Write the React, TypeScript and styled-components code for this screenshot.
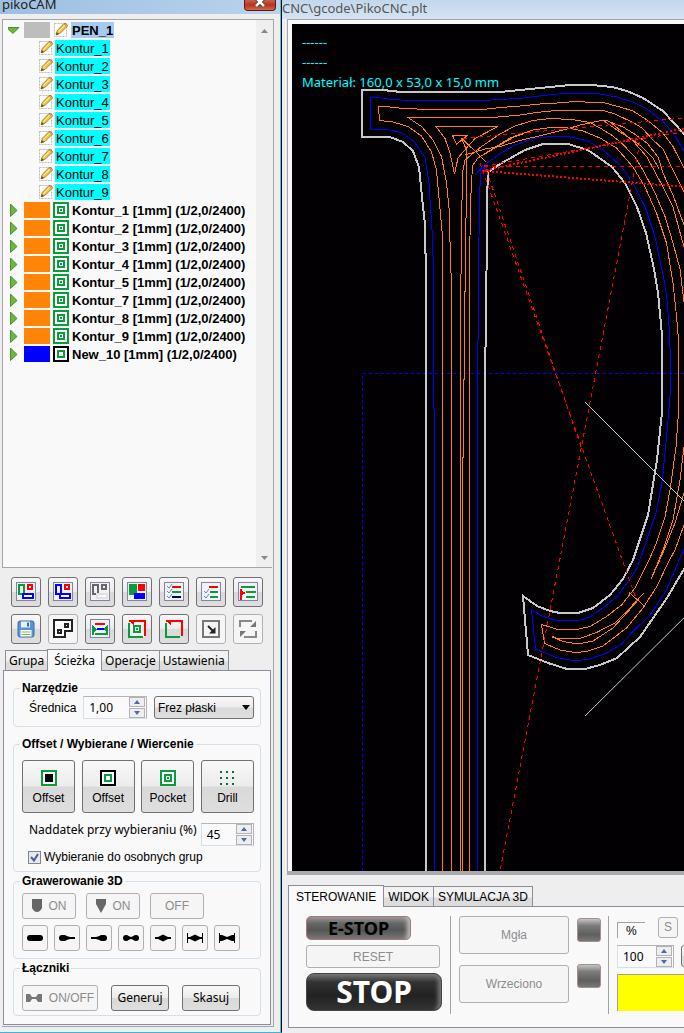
import React from 'react';
import styled, { createGlobalStyle, css } from 'styled-components';

const sans = `"Liberation Sans", Arial, sans-serif`;
const human = `"Noto Sans", "Open Sans", Tahoma, sans-serif`;
const line = '#8c8c9c';

const Global = createGlobalStyle`
  *, *::before, *::after { box-sizing: border-box; }
  body { margin: 0; background: #eeeeef; color: #000; font: 12px/14px ${sans}; overflow-x: hidden; }
  button, input, select { font: inherit; color: inherit; margin: 0; }
`;

const Screen = styled.main`
  display: grid;
  grid-template-columns: 282px minmax(0, 1fr);
  min-height: 100vh;
  overflow: hidden;
`;

const CamWindow = styled.section`
  display: flex;
  flex-direction: column;
  border-right: 1px solid #000;
  border-bottom: 1px solid #35b8e0;
  box-shadow: inset -1px 0 #35c8f4;
`;

const CamTitle = styled.header`
  display: flex;
  justify-content: space-between;
  align-items: flex-end;
  height: 14px;
  padding: 0 4px 0 2px;
  margin-right: 1px;
  overflow: hidden;
  background: linear-gradient(90deg, #9dbfe2, #b9d3ec);
`;

const TitleText = styled.h1`
  margin: 0;
  font: 13px/20px ${human};
  color: #222;
`;

const CloseButton = styled.button`
  display: flex;
  justify-content: center;
  align-self: flex-start;
  width: 32px;
  height: 11px;
  padding: 0;
  border: 1px solid #5d1a16;
  border-top: 0;
  border-radius: 0 0 4px 4px;
  background: linear-gradient(#c8604f, #b8321c 50%, #cf6a50);
`;

const CamBody = styled.div`
  display: flex;
  flex-direction: column;
  flex: 1;
  margin: 5px 7px 5px 2px;
  padding: 0 1px 1px 0;
  border: 1px solid #a4a4aa;
  border-left: 0;
`;

const TreeBox = styled.div`
  display: flex;
  flex: 1;
  min-height: 460px;
  border: 1px solid #a4a4aa;
  border-top: 0;
  border-right: 0;
  background: #f9f9f9;
`;

const Tree = styled.ul`
  flex: 1;
  margin: 0;
  padding: 1px 0 0 5px;
  list-style: none;
`;

const TreeRow = styled.li<{ $child?: boolean }>`
  display: flex;
  align-items: center;
  height: 18px;
  padding-left: ${p => (p.$child ? 30 : 0)}px;
  font-size: 13px;
  white-space: nowrap;
`;

const Twisty = styled.button`
  display: flex;
  width: 16px;
  height: 16px;
  padding: 0;
  border: 0;
  background: none;
`;

const Swatch = styled.span<{ $color: string }>`
  width: 26px;
  height: 16px;
  margin-right: 3px;
  background: ${p => p.$color};
`;

const RowLabel = styled.span<{ $bg?: string; $bold?: boolean }>`
  height: 16px;
  padding: 0 1px;
  margin-left: ${p => (p.$bold ? 2 : 1)}px;
  line-height: 17px;
  font-weight: ${p => (p.$bold ? 700 : 400)};
  background: ${p => p.$bg ?? 'none'};
`;

const ScrollTrack = styled.div`
  display: flex;
  flex-direction: column;
  justify-content: space-between;
  align-items: center;
  width: 16px;
  padding: 9px 0 7px;
  background: #efeff0;
`;

const ToolGrid = styled.div`
  display: grid;
  grid-template-columns: repeat(7, 30px);
  gap: 7px;
  padding: 9px 0 4px 9px;
`;

const raised = css`
  border: 1px solid #707074;
  background: linear-gradient(#f8f8f8, #ececec 48%, #d9d9d9 52%, #dedede);
`;

const Button = styled.button<{ $w?: number; $h?: number; $flat?: boolean; $font?: string }>`
  display: flex;
  align-items: center;
  justify-content: center;
  gap: 7px;
  width: ${p => p.$w ?? 26}px;
  height: ${p => p.$h ?? 26}px;
  padding: 0;
  border-radius: 3px;
  font-family: ${p => p.$font ?? sans};
  white-space: nowrap;
  ${raised}
  ${p => p.$flat && css`border-color: #b0b0b2; background: #f5f5f5;`}
  &:disabled { color: #8c8c8e; }
`;

const BigButton = styled(Button)`
  flex-direction: column;
  gap: 5px;
  padding-top: 2px;
`;

const Tabs = styled.nav<{ $left?: boolean }>`
  display: flex;
  align-items: flex-end;
  height: 22px;
  padding-left: ${p => (p.$left ? 3 : 0)}px;
`;

const Tab = styled.button<{ $active?: boolean; $tight?: boolean }>`
  height: ${p => (p.$active ? 22 : 20)}px;
  padding: 0 ${p => (p.$active ? 7 : 4) - (p.$tight ? 1 : 0)}px;
  border: 1px solid ${line};
  border-bottom: 0;
  margin-left: -1px;
  font-family: ${p => (p.$tight ? human : sans)};
  background: ${p => (p.$active ? '#f9f9f9' : 'linear-gradient(#f2f2f2 50%, #dcdcdc 60%)')};
  position: relative;
  z-index: ${p => (p.$active ? 1 : 0)};
  margin-bottom: ${p => (p.$active ? -1 : 0)}px;
  &:first-child { margin-left: 0; }
`;

const CamPanel = styled.div`
  display: flex;
  flex-direction: column;
  margin: 0 1px 0 1px;
  padding: 10px 9px 8px;
  border: 1px solid ${line};
  background: #f9f9f9;
`;

const Group = styled.fieldset<{ $top: number; $pad: number; $end?: number }>`
  display: flex;
  flex-direction: column;
  min-width: 0;
  margin: ${p => p.$top}px 0 0;
  padding: ${p => p.$pad}px 6px ${p => p.$end ?? 7}px 8px;
  border: 1px solid #d3dfea;
  border-radius: 4px;
`;

const Legend = styled.legend`
  padding: 0 2px;
  margin-left: -2px;
  font-weight: 700;
`;

const Row = styled.div<{ $gap?: number; $top?: number; $spread?: boolean; $indent?: number; $start?: boolean }>`
  display: flex;
  align-items: ${p => (p.$start ? 'flex-start' : 'center')};
  gap: ${p => p.$gap ?? 6}px;
  margin-top: ${p => p.$top ?? 0}px;
  padding-left: ${p => p.$indent ?? 0}px;
  justify-content: ${p => (p.$spread ? 'space-between' : 'flex-start')};
`;

const FieldLabel = styled.label<{ $font?: string }>`
  font-family: ${p => p.$font ?? sans};
  white-space: nowrap;
`;

const SpinBox = styled.span<{ $w: number }>`
  display: flex;
  align-items: center;
  width: ${p => p.$w}px;
  height: 23px;
  padding-right: 1px;
  border: 1px solid #d5dfe8;
  border-top-color: #b4b4b8;
  border-right-color: #b4b4b8;
  background: #fafafa;
  input {
    flex: 1;
    width: 0;
    height: 20px;
    padding: 0 0 0 5px;
    border: 0;
    outline: 0;
    background: none;
    font-family: ${human};
  }
`;

const SpinButtons = styled.span`
  display: flex;
  flex-direction: column;
  gap: 1px;
  button {
    display: flex;
    align-items: center;
    justify-content: center;
    width: 16px;
    height: 10px;
    padding: 0;
    border: 1px solid #b2b2b6;
    background: #eeeeef;
  }
`;

const SelectWrap = styled.span`
  position: relative;
  display: flex;
  width: 100px;
  select {
    width: 100%;
    height: 23px;
    padding: 0 3px;
    border-radius: 3px;
    appearance: none;
    ${raised}
  }
  svg { position: absolute; right: 4px; top: 9px; pointer-events: none; }
`;

const CheckWrap = styled.span`
  position: relative;
  display: flex;
  input {
    width: 13px;
    height: 13px;
    appearance: none;
    border: 1px solid #85858c;
    background: #e6e9ee;
  }
  svg { position: absolute; left: 2px; top: 2px; pointer-events: none; }
  input:not(:checked) + svg { display: none; }
`;

const CncWindow = styled.section`
  display: flex;
  flex-direction: column;
  min-width: 0;
`;

const CncTitle = styled.header`
  height: 19px;
  overflow: hidden;
  background: linear-gradient(#c3d7ec, #d5e3f2);
  h2 {
    margin: 0;
    font: 13px/16px ${human};
    color: #555;
    white-space: nowrap;
  }
`;

const Viewport = styled.div`
  position: relative;
  display: flex;
  flex: 1;
  min-height: 400px;
  margin-left: 5px;
  padding: 4px 0 0 4px;
  border: 1px solid #a4a4aa;
  border-right: 0;
  background: #f9f9f9;
  border-bottom: 4px solid #a9a9ae;
  svg { flex: 1; width: 100%; min-width: 0; background: #030004; }
`;

const Readout = styled.div`
  position: absolute;
  left: 14px;
  top: 12px;
  font: 13px/20px ${human};
  color: #0ff;
  white-space: pre;
`;

const ControlArea = styled.div`
  padding: 9px 0 5px 6px;
`;

const ControlPanel = styled.div`
  display: grid;
  grid-template-columns: 137px 120px 24px 68px;
  column-gap: 7px;
  height: 122px;
  padding: 9px 0 0 17px;
  border: 1px solid ${line};
  border-right: 0;
  overflow: hidden;
  background: #f9f9f9;
`;

const Stack = styled.div<{ $gap: number; $rule?: boolean; $top?: number }>`
  display: flex;
  flex-direction: column;
  gap: ${p => p.$gap}px;
  padding-top: ${p => p.$top ?? 0}px;
  ${p => p.$rule && css`
    height: 98px;
    padding-left: 8px;
    border-left: 1px solid #a0a0a6;
  `}
`;

const GlossButton = styled.button<{ $stop?: boolean }>`
  width: ${p => (p.$stop ? 136 : 105)}px;
  height: ${p => (p.$stop ? 38 : 24)}px;
  padding: 0;
  border: 1px solid ${p => (p.$stop ? '#444' : '#a87878')};
  border-radius: ${p => (p.$stop ? 8 : 5)}px;
  color: ${p => (p.$stop ? '#fff' : '#000')};
  font: ${p => (p.$stop ? '700 30px/34px' : '700 18px/22px')} "Noto Sans", sans-serif;
  background: ${p => (p.$stop
    ? 'linear-gradient(#777, #333 22%, #222 60%, #333)'
    : 'linear-gradient(#999, #666 30%, #555 60%, #777)')};
  box-shadow: inset -7px 0 4px -4px ${p => (p.$stop ? '#777' : '#bbb')};
`;

const Lamp = styled.span`
  width: 24px;
  height: 24px;
  border: 1px solid #a98c8c;
  border-radius: 3px;
  background: linear-gradient(#c4c4c4, #7c7c7c 30%, #5f5f5f 70%, #777);
`;

const Percent = styled.span`
  width: 28px;
  height: 16px;
  padding: 1px 0 0 8px;
  margin-top: 6px;
  border: solid #a0a0a6;
  border-width: 1px 0 0 1px;
`;

const Overrides = styled.div<{ $gap?: number }>`
  display: flex;
  gap: ${p => p.$gap ?? 13}px;
  align-items: center;
  width: 120px;
  height: 22px;
`;

const YellowBar = styled.div`
  width: 120px;
  height: 37px;
  border: solid #a0a0a6;
  border-width: 1px 0 0 1px;
  background: #ff0;
`;

const G = '#0a9b3c';

const Twist = ({ open }: { open?: boolean }) => (
  <svg width="14" height="16" viewBox="0 0 14 16">
    <path d={open ? 'M-1.500 5.500H11L5 11.500Z' : 'M2.500 2L9 8.500L2.500 14.500Z'} fill="#6cb83a" stroke="#357c1c" strokeWidth="0.8" />
  </svg>
);

const Pencil = () => (
  <svg width="16" height="16" viewBox="0 0 16 16">
    <rect x="1.5" y="1.5" width="12" height="13" fill="#fff" stroke="#bbb" strokeDasharray="2 1" />
    <path d="M3 13L4.3 8.5L11 1.5Q14 1 14.5 4L7.5 11Z" fill="#f2c84c" stroke="#9a6a20" strokeWidth="0.8" />
    <path d="M5.5 9.5L12 3" stroke="#fff0a0" />
    <path d="M3 13L3.8 10L6 12.2Z" fill="#6b4a20" />
    <path d="M11 1.8L14 4.8" stroke="#d88860" />
  </svg>
);

const Nested = ({ kind, size = 16 }: { kind: 'pocket' | 'offset' | 'solid'; size?: number }) => (
  <svg width={size} height={size} viewBox="0 0 16 16" shapeRendering="crispEdges">
    <rect x="1" y="1" width="14" height="14" fill="#fff" stroke={kind === 'offset' ? '#000' : G} strokeWidth="2" />
    {kind === 'solid' && <rect x="4" y="4" width="8" height="8" fill="#000" />}
    {kind === 'offset' && <rect x="5" y="5" width="6" height="6" fill="none" stroke={G} strokeWidth="2" />}
    {kind === 'pocket' && <>
      <rect x="5" y="5" width="6" height="6" fill="none" stroke={G} strokeWidth="2" />
      <rect x="7" y="7" width="2" height="2" fill={G} />
    </>}
  </svg>
);

const DrillIcon = () => (
  <svg width="16" height="16" viewBox="0 0 16 16" fill="#0a6b3c" shapeRendering="crispEdges">
    {[1, 7, 13].flatMap(y => [1, 7, 13].map(x => <rect key={`${x}-${y}`} x={x} y={y} width="2" height="2" />))}
  </svg>
);

const Plate = ({ children }: { children: React.ReactNode }) => (
  <svg width="20" height="20" viewBox="0 0 20 20" fill="none" shapeRendering="crispEdges">
    <rect x="0.5" y="0.5" width="19" height="18" fill="#f2f2f6" stroke="#8484a0" />
    {children}
  </svg>
);

const Blocks = ({ a, b, c }: { a: string; b: string; c: string }) => (
  <Plate>
    <rect x="3" y="3" width="5" height="9" stroke={a} strokeWidth="2" />
    <rect x="12" y="3" width="4" height="4" stroke={b} strokeWidth="2" />
    <rect x="7" y="12" width="10" height="4" fill="#fff" stroke={c} strokeWidth="2" />
  </Plate>
);

const Ticks = ({ rows }: { rows: number[] }) => (
  <>{rows.map(y => <path key={y} d={`M3 ${y}l2 2l3-4`} stroke="#5a8cc0" shapeRendering="auto" />)}</>
);

const toolIcons: { name: string; flat?: boolean; icon: React.ReactNode }[] = [
  { name: 'Kolory', icon: <Blocks a={G} b="#f00" c="#00f" /> },
  { name: 'Grupy', icon: <Blocks a="#00f" b="#f00" c="#00f" /> },
  { name: 'Szare', icon: <Blocks a="#666" b="#666" c="#e2e2e2" /> },
  { name: 'Wypełnione', icon: <Plate>
    <path d="M2 2h8v11H2z" fill={G} /><path d="M11 2h7v7h-7z" fill="#f00" /><path d="M7 11h11v6H7z" fill="#00f" />
  </Plate> },
  { name: 'Zaznacz wszystko', icon: <Plate>
    <Ticks rows={[4, 9, 14]} />
    <path d="M8 5h9" stroke="#f00" strokeWidth="2" /><path d="M8 10h9" stroke={G} strokeWidth="2" /><path d="M8 15h9" stroke="#006" strokeWidth="2" />
  </Plate> },
  { name: 'Zaznacz', icon: <Plate>
    <Ticks rows={[9, 14]} />
    <path d="M8 5h9" stroke="#f00" strokeWidth="2" /><path d="M9 10h8M9 15h8" stroke={G} strokeWidth="2" />
  </Plate> },
  { name: 'Kolejność', icon: <Plate>
    <path d="M3 5h14M8 10h10M8 15h9" stroke={G} strokeWidth="2" />
    <path d="M3 7v11" stroke="#f00" strokeWidth="2" /><path d="M3 8l5 3l-5 3z" fill="#f00" />
  </Plate> },
  { name: 'Zapisz', icon: (
    <svg width="18" height="18" viewBox="0 0 18 18">
      <rect x="1" y="1" width="16" height="16" rx="2" fill="#5d92d4" stroke="#3c68a8" />
      <path d="M4 1.5h9v6H4z" fill="#e8f1fa" /><path d="M10 2.5h2v4h-2z" fill="#3c68a8" />
      <path d="M3.5 10h11v6.500h-11z" fill="#fff" /><path d="M4.500 12h9M4.500 14.500h9" stroke="#7cb84a" />
    </svg>
  ) },
  { name: 'Obrys', flat: true, icon: (
    <svg width="20" height="20" viewBox="0 0 20 20" fill="#fff" stroke="#222" strokeWidth="2" shapeRendering="crispEdges">
      <path d="M1 1h18v11h-7v6H1z" /><path d="M12 5h3v3h-3zM5 11h3v3h-3z" />
    </svg>
  ) },
  { name: 'Przesuń', icon: <Plate>
    <path d="M5 5h10" stroke="#f00" strokeWidth="2" /><path d="M7 10h7" stroke="#00f" strokeWidth="2" />
    <path d="M5 15h11" stroke={G} strokeWidth="2" /><path d="M2 6l5 4l-3 3v3H2zM18 6l-5 4l3 3v3h2z" fill={G} />
  </Plate> },
  { name: 'Kieszeń', icon: (
    <svg width="18" height="18" viewBox="0 0 18 18" fill="none" strokeWidth="2" shapeRendering="crispEdges">
      <rect x="1" y="1" width="16" height="16" fill="#f4f4f4" />
      <path d="M1 3v14h14" stroke={G} /><path d="M1 1h16v15" stroke="#f00" />
      <path d="M0 0l6 6V1z" fill="#f00" /><rect x="6" y="6" width="6" height="6" stroke={G} /><path d="M8 9h2" stroke={G} />
    </svg>
  ) },
  { name: 'Róg', icon: (
    <svg width="18" height="18" viewBox="0 0 18 18" fill="none" strokeWidth="2" shapeRendering="crispEdges">
      <path d="M1 3v14h14" stroke={G} /><path d="M1 1h16v15" stroke="#f00" /><path d="M0 0l6 6V1z" fill="#f00" />
    </svg>
  ) },
  { name: 'Skala', flat: true, icon: (
    <svg width="18" height="18" viewBox="0 0 18 18" fill="none" stroke="#777" strokeWidth="2">
      <path d="M1 1h16v16H1z" shapeRendering="crispEdges" /><path d="M6 6l6 6" stroke="#222" />
      <path d="M13.500 7v6.500H7z" fill="#222" stroke="none" />
    </svg>
  ) },
  { name: 'Obrót', flat: true, icon: (
    <svg width="18" height="18" viewBox="0 0 18 18" fill="none" stroke="#888" strokeWidth="2">
      <path d="M1 7V1h12M17 11v6H5" shapeRendering="crispEdges" />
      <path d="M17 1v6h-6zM1 17v-6h6z" fill="#777" stroke="none" />
    </svg>
  ) },
];

const engraving: React.ReactNode[] = [
  <rect key="a" x="0" y="3" width="16" height="6" rx="3" />,
  <g key="b"><rect x="0" y="3" width="8" height="6" rx="3" /><path d="M6 3.500L11 5h5v2h-5L6 8.500z" /></g>,
  <g key="c"><rect x="8" y="3" width="8" height="6" rx="3" /><path d="M10 3.500L5 5H0v2h5l5 1.500z" /></g>,
  <g key="d"><circle cx="3" cy="6" r="3" /><circle cx="13" cy="6" r="3" /><path d="M4 3.500L8 5l4-1.500v5L8 7L4 8.500z" /></g>,
  <path key="e" d="M0 5h3l5-2.500L13 5h3v2h-3L8 9.500L3 7H0z" />,
  <path key="f" d="M0 1h1v4h2l5-2.500L13 5h2V1h1v10h-1V7h-2L8 9.500L3 7H1v4H0z" />,
  <path key="g" d="M0 1h1v2h2l5 2l5-2h2V1h1v10h-1V9h-2L8 7L3 9H1v2H0z" />,
];

const Arrow = ({ up }: { up?: boolean }) => (
  <svg width="6" height="4" viewBox="0 0 6 4"><path d={up ? 'M0 4L3 0L6 4Z' : 'M0 0L3 4L6 0Z'} fill="#5068a8" /></svg>
);

const ScrollArrow = ({ up }: { up?: boolean }) => (
  <svg width="7" height="4" viewBox="0 0 7 4"><path d={up ? 'M0 4L3.500 0L7 4Z' : 'M0 0L3.500 4L7 0Z'} fill="#888" /></svg>
);

const Spinner = ({ id, value, width, label }: { id: string; value: string; width: number; label?: string }) => (
  <SpinBox $w={width}>
    <input id={id} defaultValue={value} aria-label={label} />
    <SpinButtons>
      <button aria-label="Zwiększ"><Arrow up /></button>
      <button aria-label="Zmniejsz"><Arrow /></button>
    </SpinButtons>
  </SpinBox>
);

const Toolpath = () => (
  <svg viewBox="292 24 392 847" preserveAspectRatio="xMinYMin slice" fill="none" strokeWidth="1" shapeRendering="crispEdges">
    <g stroke="#00f" strokeDasharray="3 3"><path d="M362.500 871V373.500H720" /></g>
    <g stroke="#00f">
      <path d="M434.500 871V410L433.500 409V270L432 230L429 183L425 157L413 140.500L401 132.500L388 129.500H370.500V97.500H378L393 99.500L408 100.500H483L500 99.500L523 98L543 95.500L563 93.500H597L617 97L633 102L647 109L663 121.500L673 133L684 151L700 185" />
      <path d="M477.500 871V340L478.500 338V270L479.500 203L480.500 170L483 166M475 175L483 166L501 153L515 145L533 138.500L550 136.500L568 136.500L588 141L603 150L620 165L633 183L645 206.500L655 236.500L661 265L666.500 293L669 326L670.500 360V390L668 420L662.500 480L656 513L637 568L628 582L616.500 597L603 608L590 617L576.500 621L556.500 620.500L543 616.500L531.500 610L535.500 649L556.500 657.500L575 661L590 659L606.500 653L621.500 644L633 631.500L650 615L666.500 590L677 565L684 549L700 510" />
      <path d="M478 163L489 173" />
    </g>
    <g stroke="#ff8408">
      <path d="M442.500 871V236L439.500 203L436.500 170L431.500 152L421.500 136L408 126.500L393 122L379.500 120.500L378.500 106.500H385L403 108.500L430 109.500H483L500 107.500L520 106L540 104L557 103L575 101.500L605 103L621.500 107.500L633 111L647 120L663 133L673 146.500L684 168L700 205" />
      <path d="M451.500 871V275L450.500 270L449.500 213L446.500 183L441.500 156.500L433 140L421.500 126.500L408 117.500H493L520 115L536.500 112.500L556.500 110.500H603L615 114L633 122.500L642 128L653 140L663 149L673 170L684 192L700 230" />
      <path d="M436 126.500H498L475 138.500L466.500 148L458 158L454.500 174L450 153L445 138.500ZM452.500 135.500H467.500L456.500 144Z" />
      <path d="M460.500 871V279L461.500 270V216L463 170L465 160L481.500 146.500L500 134L515 126L533 120.500L550 118.500L571.500 119.500L590 122.500L600 128L611.500 135L621.500 143L635 157L643 170L655 193L665 216.500L673 243L680 269L684 302L688 370L684 447L680 480L673 520L663 550L652 577" />
      <path d="M462.500 871V457H463.500V379H464.500V291H465.500L466.500 150L461.500 138L486 162" />
      <path d="M469.500 871V270L470.500 203L472.500 165.500L478 158L500 145L516.500 135.500L533 130L550 127.500H566L583 131L600 138L616.500 148L633 167L645 187L656.500 213L666.500 243L673 283L676.500 316L678.500 340V412L676 447L670.500 487L665 517L656.500 543L649 560L635 588L621.500 605L606.500 616.500L590 626.500L576.500 629.500H558L541.500 624.500L544.500 643.500L560 650L575 652.500L587 651.500L603 646L626.500 628L643 608L656.500 587L669 561L675 550L684 525L700 480" />
      <path d="M465 155L485 149L500 146.500L520 140.500L543 135L567 129L580 125L601.500 120.500H606.500L623 127L633 133L647 143L658 157L663 173L673 195L684 225" />
      <path d="M604 121L617 130L640 145L653 158L659 169M609 121L633 141L647 157L663 187L673 207L684 247" />
      <path d="M478 158L510 138L523 134M684 493L675 523L662 555L651 579" />
      <path d="M552.500 636.500L557 638.500H580L596.500 632.500L615 623L637 601.500M552.500 637L563 641.500L578 644L593 641L613 628L637 601.500M629 592.500L645 606.500M644 593L628 610" />
    </g>
    <g stroke="#c8c8c8" strokeWidth="2">
      <path d="M426 871V270L424.500 220L422 197L419 167L413 151L403 142L390 137H362V90H383L401 92H500L520 90L540 88L570 85H592L612 87L627 91L643 98L663 111L684 134L710 175M710 515L684 569L667 598L640 637L617 658L600 665L585 669H567L548 663L528 655L523 596L537 606L550 611L560 613H578L593 608L610 595L623 579L633 560L648 515L657 460L662 412V335L658 293L654 269L646 233L637 207L625 183L612 167L588 150L568 144H543L525 150L500 164L488 172L487 200L486 346L485 348V871" />
    </g>
    <g stroke="#f00" strokeDasharray="4 4">
      <path d="M463 138.500L700 116.500M484 166L700 129M484 166.500H700" />
      <path d="M480 163L637 601M640 142L500 871" />
      <path d="M485 166L581 447" strokeDashoffset="3" />
    </g>
    <g stroke="#f00" strokeWidth="2" strokeDasharray="2 2">
      <path d="M482 171L700 125M484 171L700 188" />
    </g>
    <path d="M585 402L700 517M585 716L700 602" stroke="#b4d4d4" shapeRendering="auto" />
  </svg>
);

export default function App() {
  return (
    <Screen>
      <Global />
      <CamWindow>
        <CamTitle>
          <TitleText>pikoCAM</TitleText>
          <CloseButton aria-label="Zamknij">
            <svg width="12" height="8" viewBox="0 0 12 8"><path d="M2 -2L10 6M10 -2L2 6" stroke="#433" strokeWidth="4" /><path d="M2 -2L10 6M10 -2L2 6" stroke="#fff" strokeWidth="2.500" /></svg>
          </CloseButton>
        </CamTitle>
        <CamBody>
          <TreeBox>
            <Tree>
              <TreeRow>
                <Twisty aria-label="Zwiń"><Twist open /></Twisty>
                <Swatch $color="#bdbdbd" />
                <Pencil />
                <RowLabel $bold $bg="#a6caf0">PEN_1</RowLabel>
              </TreeRow>
              {[1, 2, 3, 4, 5, 6, 7, 8, 9].map(n => (
                <TreeRow key={n} $child>
                  <Pencil />
                  <RowLabel $bg="#0ff">Kontur_{n}</RowLabel>
                </TreeRow>
              ))}
              {[1, 2, 3, 4, 5, 7, 8, 9].map(n => (
                <TreeRow key={n}>
                  <Twisty aria-label="Rozwiń"><Twist /></Twisty>
                  <Swatch $color="#ff8408" />
                  <Nested kind="pocket" />
                  <RowLabel $bold>Kontur_{n} [1mm] (1/2,0/2400)</RowLabel>
                </TreeRow>
              ))}
              <TreeRow>
                <Twisty aria-label="Rozwiń"><Twist /></Twisty>
                <Swatch $color="#00f" />
                <Nested kind="offset" />
                <RowLabel $bold>New_10 [1mm] (1/2,0/2400)</RowLabel>
              </TreeRow>
            </Tree>
            <ScrollTrack><ScrollArrow up /><ScrollArrow /></ScrollTrack>
          </TreeBox>
          <ToolGrid>
            {toolIcons.map(t => (
              <Button key={t.name} $w={30} $h={30} $flat={t.flat} aria-label={t.name}>{t.icon}</Button>
            ))}
          </ToolGrid>
          <Tabs $left>
            <Tab $tight>Grupa</Tab>
            <Tab $tight $active>Ścieżka</Tab>
            <Tab $tight>Operacje</Tab>
            <Tab $tight>Ustawienia</Tab>
          </Tabs>
          <CamPanel>
            <Group $top={0} $pad={1}>
              <Legend>Narzędzie</Legend>
              <Row $gap={4} $indent={7} $spread>
                <FieldLabel htmlFor="dia">Średnica</FieldLabel>
                <Spinner id="dia" value="1,00" width={64} />
                <SelectWrap>
                  <select aria-label="Typ frezu" defaultValue="flat"><option value="flat">Frez płaski</option></select>
                  <svg width="8" height="5" viewBox="0 0 8 5"><path d="M0 0H8L4 5Z" /></svg>
                </SelectWrap>
              </Row>
            </Group>
            <Group $top={10} $pad={9}>
              <Legend>Offset / Wybierane / Wiercenie</Legend>
              <Row $spread>
                <BigButton $w={53} $h={53}><Nested kind="solid" />Offset</BigButton>
                <BigButton $w={53} $h={53}><Nested kind="offset" />Offset</BigButton>
                <BigButton $w={53} $h={53}><Nested kind="pocket" />Pocket</BigButton>
                <BigButton $w={53} $h={53}><DrillIcon />Drill</BigButton>
              </Row>
              <Row $top={10} $gap={4} $spread $start $indent={7}>
                <FieldLabel htmlFor="over" $font={human}>Naddatek przy wybieraniu (%)</FieldLabel>
                <Spinner id="over" value="45" width={54} />
              </Row>
              <Row $top={4} $gap={3} $indent={6}>
                <CheckWrap>
                  <input id="sep" type="checkbox" defaultChecked />
                  <svg width="9" height="9" viewBox="0 0 9 9"><path d="M1 4L4 7.500L8 1" fill="none" stroke="#4a5f9a" strokeWidth="2" /></svg>
                </CheckWrap>
                <FieldLabel htmlFor="sep">Wybieranie do osobnych grup</FieldLabel>
              </Row>
            </Group>
            <Group $top={2} $pad={5}>
              <Legend>Grawerowanie 3D</Legend>
              <Row $gap={10}>
                <Button $w={54} $flat disabled>
                  <svg width="10" height="14" viewBox="0 0 10 14"><path d="M0 0H10V9Q8 13 5 13Q2 13 0 9Z" fill="#666" /></svg>ON
                </Button>
                <Button $w={54} $flat disabled>
                  <svg width="10" height="14" viewBox="0 0 10 14"><path d="M0 0H10V5L5 14L0 5Z" fill="#666" /></svg>ON
                </Button>
                <Button $w={54} $flat disabled>OFF</Button>
              </Row>
              <Row $top={6}>
                {engraving.map((shape, i) => (
                  <Button key={i} $flat aria-label={`Profil ${i + 1}`}>
                    <svg width="16" height="12" viewBox="0 0 16 12">{shape}</svg>
                  </Button>
                ))}
              </Row>
            </Group>
            <Group $top={2} $pad={10} $end={4}>
              <Legend>Łączniki</Legend>
              <Row $gap={13}>
                <Button $w={76} $flat disabled>
                  <svg width="16" height="10" viewBox="0 0 16 10"><path d="M0 1h4l2 3h4l2-3h4v8h-4l-2-3H6L4 9H0z" fill="#777" /></svg>ON/OFF
                </Button>
                <Button $w={58} $font={human}>Generuj</Button>
                <Button $w={58} $font={human}>Skasuj</Button>
              </Row>
            </Group>
          </CamPanel>
        </CamBody>
      </CamWindow>
      <CncWindow>
        <CncTitle><h2>CNC\gcode\PikoCNC.plt</h2></CncTitle>
        <Viewport>
          <Toolpath />
          <Readout>{'------\n------\nMateriał: 160,0 x 53,0 x 15,0 mm'}</Readout>
        </Viewport>
        <ControlArea>
          <Tabs>
            <Tab $active>STEROWANIE</Tab>
            <Tab>WIDOK</Tab>
            <Tab>SYMULACJA 3D</Tab>
          </Tabs>
          <ControlPanel>
            <Stack $gap={5}>
              <GlossButton>E-STOP</GlossButton>
              <Button $w={134} $h={23} $flat disabled>RESET</Button>
              <GlossButton $stop>STOP</GlossButton>
            </Stack>
            <Stack $gap={11} $rule>
              <Button $w={110} $h={38} $flat disabled>Mgła</Button>
              <Button $w={110} $h={38} $flat disabled>Wrzeciono</Button>
            </Stack>
            <Stack $gap={22} $top={2}><Lamp /><Lamp /></Stack>
            <Stack $gap={7} $rule>
              <Overrides>
                <Percent>%</Percent>
                <Button $w={20} $h={21} $flat disabled>S</Button>
                <Button $w={24} $h={21} $flat aria-label="Reset" />
              </Overrides>
              <Overrides $gap={7}>
                <Spinner id="feed" value="100" width={57} label="Posuw %" />
                <Button $w={24} $h={22} aria-label="Ustaw" />
              </Overrides>
              <YellowBar />
            </Stack>
          </ControlPanel>
        </ControlArea>
      </CncWindow>
    </Screen>
  );
}
